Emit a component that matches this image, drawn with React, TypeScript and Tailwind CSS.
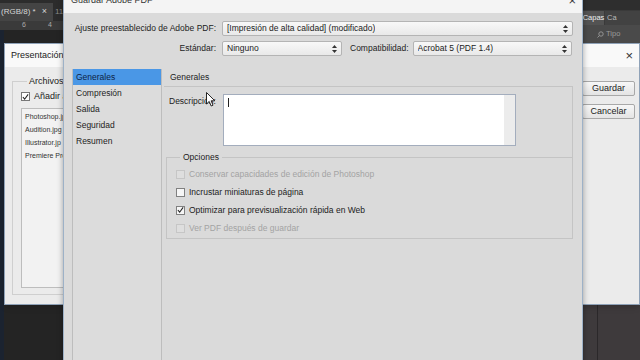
import React from "react";

const font = { fontFamily: '"Liberation Sans", Arial, sans-serif' };

const SelectArrows = () => (
  <svg width="5" height="8" viewBox="0 0 5 8" className="shrink-0">
    <path d="M2.5 0 L5 3 L0 3 Z" fill="#333" />
    <path d="M0 5 L5 5 L2.5 8 Z" fill="#333" />
  </svg>
);

const Select = ({ text, className }: { text: string; className: string }) => (
  <div
    className={`flex h-[15px] items-center justify-between rounded-[2px] border border-[#b4b4b4] bg-gradient-to-b from-[#f8f8f8] to-[#e9e9e9] pl-[4px] pr-[4px] text-[#1c1c1c] ${className}`}
  >
    <span className="truncate">{text}</span>
    <SelectArrows />
  </div>
);

const Check = ({
  label,
  checked,
  disabled,
}: {
  label: string;
  checked?: boolean;
  disabled?: boolean;
}) => (
  <div className="flex h-[18px] items-center">
    <div
      className={`flex h-[9px] w-[9px] items-center justify-center border ${
        disabled ? "border-[#c6c6c6] bg-[#dedede]" : "border-[#808080] bg-[#f6f6f6]"
      }`}
    >
      {checked && (
        <svg width="8" height="8" viewBox="0 0 8 8">
          <path d="M1 4 L3 6.5 L7 1" fill="none" stroke="#222" strokeWidth="1.2" />
        </svg>
      )}
    </div>
    <span className={`ml-[4px] ${disabled ? "text-[#a3a3a3]" : "text-[#1c1c1c]"}`}>{label}</span>
  </div>
);

const PhotoshopBackdrop = () => (
  <div className="flex h-full w-full">
    <div className="flex flex-1 flex-col">
      <div className="flex h-[21px] items-end bg-[#2c2c2c]">
        <div className="flex h-[18px] w-[53px] items-center justify-between bg-[#444] pl-[1px] pr-[6px] text-[8px] text-[#d6d6d6]">
          <span>(RGB/8) *</span>
          <span className="text-[9px]">×</span>
        </div>
        <div className="ml-[2px] flex h-[18px] items-center text-[8px] text-[#8a8a8a]">11</div>
      </div>
      <div className="flex h-[9px] items-center bg-[#3a3a3a] text-[7px] text-[#aaa]">
        <span className="ml-[22px]">6</span>
        <span className="ml-[22px]">4</span>
      </div>
      <div className="flex flex-1">
        <div className="w-[4px] bg-[#1b2330]" />
        <div className="flex-1 bg-[#242424]" />
      </div>
    </div>
    <div className="flex w-[57px] flex-col">
      <div className="h-[10px] bg-[#2e2e2e]" />
      <div className="flex h-[15px] items-end bg-[#3a3a3a] text-[7.5px]">
        <div className="flex h-[14px] w-[21px] items-center justify-center bg-[#535353] text-[#eee]">Capas</div>
        <div className="ml-[1px] flex h-[14px] flex-1 items-center bg-[#424242] pl-[2px] text-[#bbb]">Ca</div>
      </div>
      <div className="flex h-[18px] items-center bg-[#4a4a4a] pl-[14px] text-[7.5px] text-[#9a9a9a]">
        <svg width="7" height="7" viewBox="0 0 7 7" className="mr-[2px]">
          <circle cx="4" cy="3" r="2.2" fill="none" stroke="#9a9a9a" strokeWidth="0.9" />
          <path d="M2.4 4.6 L0.5 6.5" stroke="#9a9a9a" strokeWidth="0.9" />
        </svg>
        Tipo
      </div>
      <div className="flex flex-1 bg-[#3e3a3c]">
        <div className="w-[14px]" />
        <div className="w-[1px] bg-[#2b282a]" />
      </div>
    </div>
  </div>
);

const BackDialog = () => (
  <div className="absolute left-[4px] top-[43px] flex h-[262px] w-[636px] flex-col border border-[#8fa2b8] bg-[#ebebeb] text-[8.5px] shadow-md">
    <div className="flex h-[23px] items-center justify-between bg-[#f9f9f9] pl-[6px] pr-[6px] text-[#222]">
      <span className="text-[9px]">Presentación e</span>
      <span className="text-[13px] font-light text-[#333]">×</span>
    </div>
    <div className="flex flex-1 justify-between">
      {/* only the strip left of the front dialog is visible */}
      <div className="flex w-[58px] overflow-hidden">
        <div className="relative ml-[7px] mt-[14px] mb-[9px] w-[200px] shrink-0 border border-[#cfcfcf] pl-[8px] pt-[8px]">
          <span className="absolute -top-[7px] left-[14px] bg-[#ebebeb] px-[2px] text-[9px] text-[#222]">
            Archivos d
          </span>
          <div className="flex items-center">
            <div className="flex h-[9px] w-[9px] items-center justify-center border border-[#777] bg-white">
              <svg width="8" height="8" viewBox="0 0 8 8">
                <path d="M1 4 L3 6.5 L7 1" fill="none" stroke="#222" strokeWidth="1.2" />
              </svg>
            </div>
            <span className="ml-[4px] text-[9px] text-[#222]">Añadir a</span>
          </div>
          <div className="mt-[4px] flex h-[180px] flex-col border border-[#bdbdbd] bg-[#f2f2f2] pl-[3px] pt-[1px] text-[7px] leading-[13px] text-[#333]">
            <span>Photoshop.jp</span>
            <span>Audition.jpg</span>
            <span>Illustrator.jp</span>
            <span>Premiere Pro</span>
          </div>
        </div>
      </div>
      <div className="mr-[4px] mt-[14px] flex w-[53px] flex-col gap-[8px] text-[9px] text-[#222]">
        <div className="flex h-[15px] items-center justify-center rounded-[2px] border border-[#a8a8a8] bg-gradient-to-b from-[#f7f7f7] to-[#e4e4e4]">
          Guardar
        </div>
        <div className="flex h-[15px] items-center justify-center rounded-[2px] border border-[#a8a8a8] bg-gradient-to-b from-[#f7f7f7] to-[#e4e4e4]">
          Cancelar
        </div>
      </div>
    </div>
  </div>
);

const FrontDialog = () => (
  <div className="absolute left-[63px] top-[-12px] flex h-[380px] w-[520px] flex-col border-x border-[#9db1c7] bg-[#dadada] text-[8.5px] text-[#1c1c1c] shadow-[0_0_6px_rgba(0,0,0,0.35)]">
    <div className="flex h-[25px] items-center justify-between bg-[#f4f4f4] pl-[7px] pr-[6px]">
      <span className="text-[9px] text-[#333]">Guardar Adobe PDF</span>
      <span className="text-[13px] font-light text-[#333]">×</span>
    </div>
    <div className="mt-[8px] flex items-center">
      <span className="w-[152px] text-right">Ajuste preestablecido de Adobe PDF:</span>
      <Select className="ml-[6px] w-[351px]" text="[Impresión de alta calidad] (modificado)" />
    </div>
    <div className="mt-[5px] flex items-center">
      <span className="w-[152px] text-right">Estándar:</span>
      <Select className="ml-[6px] w-[120px]" text="Ninguno" />
      <span className="ml-[8px]">Compatibilidad:</span>
      <Select className="ml-[4px] w-[159px]" text="Acrobat 5 (PDF 1.4)" />
    </div>
    <div className="mt-[13px] flex flex-1">
      <div className="ml-[8px] flex w-[90px] flex-col border-l border-r border-[#bdbdbd] bg-[#dcdcdc]">
        <div className="flex h-[16px] items-center bg-[#4a97e6] pl-[3px] text-[#0d1f45]">Generales</div>
        <div className="flex h-[16px] items-center pl-[3px]">Compresión</div>
        <div className="flex h-[16px] items-center pl-[3px]">Salida</div>
        <div className="flex h-[16px] items-center pl-[3px]">Seguridad</div>
        <div className="flex h-[16px] items-center pl-[3px]">Resumen</div>
      </div>
      <div className="ml-[2px] mr-[9px] flex flex-1 flex-col">
        <div className="flex h-[17px] items-center pl-[6px]">Generales</div>
        <div className="flex h-[71px] border-t border-r border-[#c4c4c4] pt-[7px]">
          <span className="w-[59px] pl-[5px] pt-[1px]">Descripción:</span>
          <div className="flex h-[52px] w-[293px] border border-[#a3adbd] bg-white">
            <div className="flex-1 pl-[4px] pt-[3px]">
              <div className="h-[9px] w-[1px] bg-[#222]" />
            </div>
            <div className="w-[11px] bg-[#ececec]" />
          </div>
        </div>
        <div className="relative ml-[2px] h-[82px] border border-[#c4c4c4] pl-[9px] pt-[7px]">
          <span className="absolute -top-[7px] left-[13px] bg-[#dadada] px-[3px]">Opciones</span>
          <Check label="Conservar capacidades de edición de Photoshop" disabled />
          <Check label="Incrustar miniaturas de página" />
          <Check label="Optimizar para previsualización rápida en Web" checked />
          <Check label="Ver PDF después de guardar" disabled />
        </div>
      </div>
    </div>
  </div>
);

export default function App() {
  return (
    <div className="relative h-[360px] w-[640px] overflow-hidden bg-[#262626]" style={font}>
      <PhotoshopBackdrop />
      <BackDialog />
      <FrontDialog />
      <svg
        width="10"
        height="15"
        viewBox="0 0 10 15"
        className="pointer-events-none absolute left-[206px] top-[92px]"
      >
        <path d="M0.5 0.5 L0.5 12 L3.2 9.4 L5.2 14 L7 13.2 L5.1 8.8 L8.8 8.8 Z" fill="#fff" stroke="#111" strokeWidth="0.9" />
      </svg>
    </div>
  );
}
